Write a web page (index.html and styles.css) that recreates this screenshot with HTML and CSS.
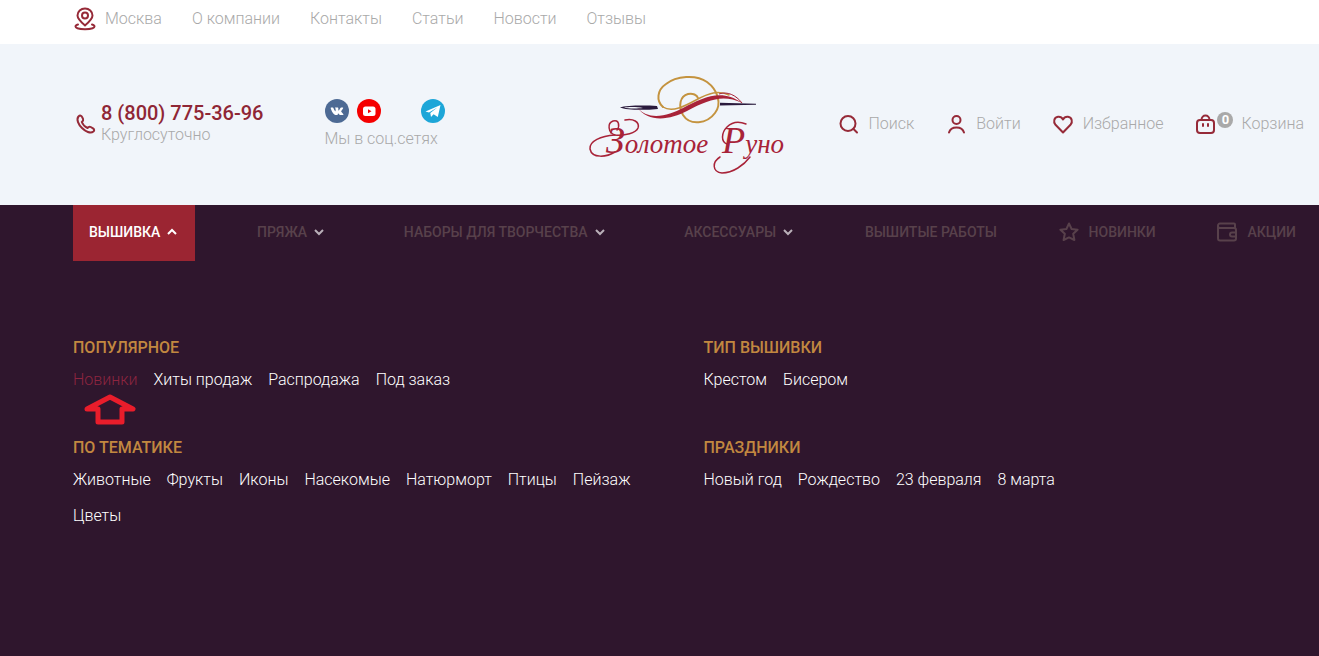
FILE: index.html
```html
<!DOCTYPE html>
<html lang="ru">
<head>
    <meta charset="UTF-8">
    <meta name="viewport" content="width=device-width, initial-scale=1.0">
    <title>Золотое Руно</title>
    <link rel="stylesheet" href="styles.css">
</head>
<body>
    <!-- Верхняя строка -->
    <div class="topbar container">
        <a class="city" href="#">
            <svg class="icon" width="24" height="24" viewBox="0 0 24 24">
                <path d="M12 18.500C8 15 4.500 12 4.500 8.500a7.500 7 0 0 1 15 0C19.500 12 16 15 12 18.500z"/>
                <circle cx="12" cy="8.500" r="3"/>
                <path d="M5 17.500C3.200 18 2.500 18.700 2.500 19.600C2.500 21.200 6.500 22.300 12 22.300s9.500-1.100 9.500-2.700c0-.9-.7-1.600-2.500-2.100"/>
            </svg>
            Москва
        </a>
        <a href="#">О компании</a>
        <a href="#">Контакты</a>
        <a href="#">Статьи</a>
        <a href="#">Новости</a>
        <a href="#">Отзывы</a>
    </div>

    <!-- Шапка -->
    <header class="header container">
        <div class="contacts">
            <div class="phone">
                <svg class="icon" width="24" height="24" viewBox="0 0 24 24">
                    <path d="M5.500 4.500C7 3 8.500 3.500 9.300 5.300l.8 1.900c.5 1.200-.3 2-1.300 2.800C10 13 12 15 14.500 16c1-1.200 2-1.700 3.200-1l2.300 1.400c1.500 1 1.500 2.200.4 3.200C17.500 22 12.500 19.500 9 16S3 7.500 5.500 4.500z"/>
                </svg>
                <div>
                    <a class="phone-number" href="tel:88007753696">8 (800) 775-36-96</a>
                    <p>Круглосуточно</p>
                </div>
            </div>

            <div class="social">
                <div class="social-list">
                    <a class="vk" href="#" aria-label="VK">
                        <svg width="24" height="24" viewBox="0 0 24 24">
                            <circle cx="12" cy="12" r="12" fill="#4d6a94"/>
                            <path fill="#fff" d="M11.400 16.100h.9s.4 0 .4-.5c0-1.100.5-1.300 1.100-.7.8.9 1.200 1.200 2.100 1.200h1.700c1 0 1.100-.6.400-1.400l-1.700-1.900c-.2-.3-.2-.5 0-.8.600-.8 1.600-2.100 1.900-3 .1-.400 0-.6-.5-.6h-1.600c-.4 0-.6.2-.7.5-.4 1-.9 1.800-1.500 2.500-.3.300-.6.200-.6-.3V9.300c0-.7-.2-.9-.8-.9h-2.100c-.5 0-.6.300-.3.600.4.400.5.700.5 1.300v1.500c0 .6-.3.600-.6.200-.7-.9-1.100-1.800-1.500-2.800-.2-.4-.3-.6-.8-.6H6.200c-.500 0-.6.200-.5.600.8 2.800 2.900 6.900 5.700 6.900z"/>
                        </svg>
                    </a>
                    <a class="youtube" href="#" aria-label="YouTube">
                        <svg width="24" height="24" viewBox="0 0 24 24">
                            <circle cx="12" cy="12" r="12" fill="#f50000"/>
                            <rect x="6" y="7.500" width="12.500" height="9.500" rx="2.500" fill="#fff"/>
                            <path fill="#f50000" d="M11 10.200v4l3.500-2z"/>
                        </svg>
                    </a>
                    <a class="telegram" href="#" aria-label="Telegram">
                        <svg width="24" height="24" viewBox="0 0 24 24">
                            <circle cx="12" cy="12" r="12" fill="#1da6d8"/>
                            <path fill="#fff" d="M4.500 12.500L19.500 6 16.800 18 12.600 15.200 10 18 9.300 14 16.300 8.600 8 13.500z"/>
                        </svg>
                    </a>
                </div>
                <p>Мы в соц.сетях</p>
            </div>
        </div>

        <a class="logo" href="#" aria-label="Золотое Руно">
            <svg width="220" height="115" viewBox="0 0 220 115">
                <!-- золотое руно -->
                <g fill="none" stroke="#c4933f" stroke-linecap="round">
                    <path stroke-width="2" d="M84 41C77 35 78 24 87 18C97 10 117 8 128 16C139 24 143 38 136 47C128 58 111 60 104 49C99 40 101 30 109 28C114 27 118 29 119 32"/>
                    <path stroke-width="1.500" d="M84 41C93 47 106 40 117 34C130 27 139 24 150 29"/>
                </g>
                <!-- игла -->
                <path fill="#2a1a3c" fill-rule="evenodd" d="M41 41.500C47 39.500 64 39 78 40L79 43C64 44.500 47 44 41 41.500zM45 41.500C49 42.800 59 42.600 64 42C59 40.800 50 40.600 45 41.500z"/>
                <path fill="#2a1a3c" d="M141 36.800L177 37.700V38.800L141 39.500z"/>
                <!-- нить -->
                <path fill="#a82338" d="M58 41C70 56 90 49 104 42C124 32 142 22 163 37C145 28 130 33 108 45C91 54 69 57 58 41z"/>
                <path fill="none" stroke="#a82338" d="M140 28C148 25 157 29 163 37"/>
                <!-- завитки -->
                <g fill="none" stroke="#a82338" stroke-width="1.500" stroke-linecap="round">
                    <path d="M46 54C54 52 61 56 59 62C57 67 46 70 36 69C29 67 28 57 34 55C40 53 41 60 38 64"/>
                    <path d="M36 86C28 91 13 93 11 83C10 75 22 70 36 69"/>
                    <path d="M171 91C165 99 154 107 143 107C133 106 133 96 141 91"/>
                    <path d="M148 78C142 76 142 67 148 61C153 56 160 55 167 58"/>
                </g>
                <!-- название -->
                <text class="logo-text" x="27" y="87"><tspan class="logo-cap">З</tspan>олотое</text>
                <text class="logo-text" x="143" y="87"><tspan class="logo-cap">Р</tspan>уно</text>
            </svg>
        </a>

        <div class="actions">
            <a href="#">
                <svg class="icon" width="24" height="24" viewBox="0 0 24 24">
                    <circle cx="12" cy="11.500" r="7.500"/>
                    <path d="M17.500 17l3.500 3.500"/>
                </svg>
                Поиск
            </a>
            <a href="#">
                <svg class="icon" width="24" height="24" viewBox="0 0 24 24">
                    <circle cx="12.500" cy="8" r="4"/>
                    <path d="M5 20.500C6 17 9 15.500 12.500 15.500s6.500 1.500 7.500 5"/>
                </svg>
                Войти
            </a>
            <a href="#">
                <svg class="icon" width="24" height="24" viewBox="0 0 24 24">
                    <path d="M12 20.500L4.500 12.800C2 10 3 5.300 7 4.800C9.300 4.500 11 5.700 12 7.500C13 5.700 14.700 4.500 17 4.800C21 5.300 22 10 19.500 12.800z"/>
                </svg>
                Избранное
            </a>
            <a href="#">
                <svg class="icon" width="24" height="24" viewBox="0 0 24 24">
                    <rect x="4" y="8" width="17" height="13" rx="3"/>
                    <path d="M8.500 8C8.500 5 10.500 3.500 12.500 3.500S16.500 5 16.500 8M10 12v2M15 12v2"/>
                </svg>
                <span class="cart-count">0</span>
                Корзина
            </a>
        </div>
    </header>

    <div class="catalog">
        <!-- Главное меню -->
        <nav class="nav container">
            <button class="nav-button active" type="button" aria-expanded="true">
                ВЫШИВКА
                <svg width="10" height="8" viewBox="0 0 10 8"><path d="M1 6l4-4 4 4"/></svg>
            </button>
            <button class="nav-button" type="button">
                ПРЯЖА
                <svg width="10" height="8" viewBox="0 0 10 8"><path d="M1 2l4 4 4-4"/></svg>
            </button>
            <button class="nav-button" type="button">
                НАБОРЫ ДЛЯ ТВОРЧЕСТВА
                <svg width="10" height="8" viewBox="0 0 10 8"><path d="M1 2l4 4 4-4"/></svg>
            </button>
            <button class="nav-button" type="button">
                АКСЕССУАРЫ
                <svg width="10" height="8" viewBox="0 0 10 8"><path d="M1 2l4 4 4-4"/></svg>
            </button>
            <a class="nav-link" href="#">ВЫШИТЫЕ РАБОТЫ</a>
            <a class="nav-link" href="#">
                <svg width="20" height="20" viewBox="0 0 20 20"><path d="M10 1.500l2.600 5.500 6 .7-4.400 4.100 1.200 6.200L10 15.400 4.600 18l1.200-6.200L1.400 7.700l6-.7z"/></svg>
                НОВИНКИ
            </a>
            <a class="nav-link" href="#">
                <svg width="20" height="20" viewBox="0 0 20 20"><path d="M18 6V2.500a1 1 0 0 0-1-1H3a2 2 0 0 0-2 2V16.500a2 2 0 0 0 2 2H17a2 2 0 0 0 2-2V8a2 2 0 0 0-2-2H3a2 2 0 0 1-2-2M19 10.500H15a2 2 0 0 0 0 4h4"/></svg>
                АКЦИИ
            </a>
        </nav>

        <!-- Выпадающее меню "Вышивка" -->
        <div class="menu container">
            <section class="menu-group">
                <h2>ПОПУЛЯРНОЕ</h2>
                <div class="menu-links">
                    <a class="hover" href="#">
                        Новинки
                        <svg class="arrow" width="54" height="32" viewBox="0 0 54 32"><path d="M27 3L50 15H39V28H15V15H4z"/></svg>
                    </a>
                    <a href="#">Хиты продаж</a>
                    <a href="#">Распродажа</a>
                    <a href="#">Под заказ</a>
                </div>
            </section>
            <section class="menu-group">
                <h2>ТИП ВЫШИВКИ</h2>
                <div class="menu-links">
                    <a href="#">Крестом</a>
                    <a href="#">Бисером</a>
                </div>
            </section>
            <section class="menu-group">
                <h2>ПО ТЕМАТИКЕ</h2>
                <div class="menu-links">
                    <a href="#">Животные</a>
                    <a href="#">Фрукты</a>
                    <a href="#">Иконы</a>
                    <a href="#">Насекомые</a>
                    <a href="#">Натюрморт</a>
                    <a href="#">Птицы</a>
                    <a href="#">Пейзаж</a>
                    <a href="#">Цветы</a>
                </div>
            </section>
            <section class="menu-group">
                <h2>ПРАЗДНИКИ</h2>
                <div class="menu-links">
                    <a href="#">Новый год</a>
                    <a href="#">Рождество</a>
                    <a href="#">23 февраля</a>
                    <a href="#">8 марта</a>
                </div>
            </section>
        </div>
    </div>
</body>
</html>
```

FILE: styles.css
```css
* {
    margin: 0;
    padding: 0;
    box-sizing: border-box;
}

body {
    min-height: 100vh;
    display: flex;
    flex-direction: column;
    background-color: #fff;
    color: #a9a9a9;
    font-family: Roboto, sans-serif;
    font-size: 16px;
    font-weight: 300;
    line-height: 20px;
}

a {
    color: inherit;
    text-decoration: none;
}

svg {
    display: block;
    flex-shrink: 0;
}

.container {
    padding-left: 73px;
    padding-right: 15px;
}

.icon {
    fill: none;
    stroke: #962a38;
    stroke-width: 2;
    stroke-linecap: round;
    stroke-linejoin: round;
}

/* Верхняя строка */
.topbar {
    display: flex;
    align-items: center;
    gap: 30px;
    height: 44px;
    padding-bottom: 6px;
}

.city {
    display: flex;
    align-items: center;
    gap: 8px;
}

/* Шапка */
.header {
    display: grid;
    grid-template-columns: 1fr auto 1fr;
    align-items: center;
    height: 161px;
    padding-bottom: 2px;
    background-color: #f1f5fa;
}

.contacts,
.phone {
    display: flex;
    align-items: center;
}

.contacts {
    gap: 61px;
}

.phone {
    gap: 4px;
}

.phone-number {
    color: #8f2635;
    font-size: 20px;
    font-weight: 500;
}

.social-list {
    display: flex;
    gap: 8px;
    margin-bottom: 6px;
}

.telegram {
    margin-left: 32px;
}

.logo-text {
    fill: #a82338;
    font-family: "Liberation Serif", serif;
    font-size: 27px;
    font-style: italic;
}

.logo-cap {
    font-size: 38px;
}

.actions {
    display: flex;
    justify-content: flex-end;
    gap: 30px;
}

.actions a {
    display: flex;
    align-items: center;
    gap: 8px;
}

.actions .cart-count {
    width: 16px;
    height: 16px;
    margin: 0 0 8px -8px;
    border-radius: 50%;
    background-color: #a9a9a9;
    color: #fff;
    font-size: 13px;
    font-weight: 700;
    line-height: 16px;
    text-align: center;
}

/* Главное меню */
.catalog {
    flex: 1;
    background-color: #2f162d;
}

.nav {
    display: flex;
    justify-content: space-between;
}

.nav-button,
.nav-link {
    display: flex;
    align-items: center;
    height: 56px;
    color: #58414b;
    font-family: inherit;
    font-size: 14px;
    font-weight: 500;
}

.nav-button {
    gap: 7px;
    padding: 0 18px 2px 16px;
    border: none;
    background-color: transparent;
    cursor: pointer;
}

.nav-button svg {
    fill: none;
    stroke: #b9afb8;
    stroke-width: 2;
}

.nav-button.active {
    background-color: #9b2532;
    color: #fff;
}

.nav-button.active svg {
    stroke: #fff;
}

.nav-link {
    gap: 10px;
    padding: 0 8px 2px;
}

.nav-link svg {
    fill: none;
    stroke: #58414b;
    stroke-width: 2;
    stroke-linejoin: round;
}

/* Выпадающее меню */
.menu {
    display: grid;
    grid-template-columns: 1fr 1fr;
    gap: 36px 30px;
    padding-top: 73px;
    padding-bottom: 73px;
}

.menu-group h2 {
    color: #c28840;
    font-size: 16px;
    font-weight: 500;
    line-height: 28px;
}

.menu-links {
    display: flex;
    flex-wrap: wrap;
    column-gap: 16px;
    color: #fff;
    line-height: 36px;
}

.menu-links .hover {
    position: relative;
    color: #8d2540;
}

/* Указатель под пунктом */
.arrow {
    position: absolute;
    top: 32px;
    left: 10px;
    fill: none;
    stroke: #e91d2b;
    stroke-width: 5;
    stroke-linejoin: round;
}
```
